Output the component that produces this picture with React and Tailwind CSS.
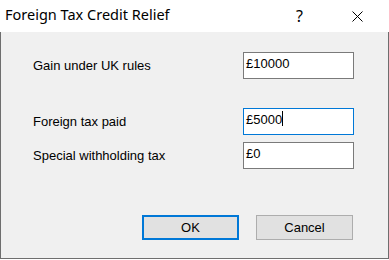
import React from 'react';

const label = "font-['Liberation_Sans',Arial,sans-serif] text-[13px] leading-[16px] text-black";

const Field = ({ text, focused, caret }) => (
  <div
    className={`w-[111px] h-[27px] bg-white border pl-[2px] pt-[3px] flex items-start ${focused ? 'border-[#0078d7]' : 'border-[#7a7a7a]'}`}
  >
    <span className={label}>{text}</span>
    {caret && <span className="w-px h-[15px] bg-black -mt-[1px]"></span>}
  </div>
);

const Row = ({ name, value, focused, caret }) => (
  <div className="flex items-center">
    <div className={`flex-1 pt-[1px] ${label}`}>{name}</div>
    <Field text={value} focused={focused} caret={caret} />
  </div>
);

export default function App() {
  return (
    <div className="w-[389px] h-[260px] bg-white flex flex-col overflow-hidden">
      <div className="h-[32px] shrink-0 flex items-center relative">
        <span className="pl-[5px] pb-[2px] font-['Noto_Sans',sans-serif] text-[14.5px] text-black">
          Foreign Tax Credit Relief
        </span>
        <span className="absolute left-[296px] top-[4px] font-['Noto_Sans',sans-serif] text-[16px] text-black">?</span>
        <svg className="absolute left-[352px] top-[11px]" width="11" height="11" viewBox="0 0 11 11">
          <path d="M0.5 0.5 L10.5 10.5 M10.5 0.5 L0.5 10.5" stroke="#000" strokeWidth="1" fill="none" />
        </svg>
      </div>

      <div className="h-[227px] shrink-0 bg-[#f0f0f0] border-l border-r border-b border-[#6e6e6e] pl-[32px] pr-[34px] pt-[20px]">
        <Row name="Gain under UK rules" value="£10000" />
        <div className="h-[29px]"></div>
        <Row name="Foreign tax paid" value="£5000" focused caret />
        <div className="h-[7px]"></div>
        <Row name="Special withholding tax" value="£0" />

        <div className="flex justify-end gap-[17px] mt-[46px] pr-px">
          <button className={`w-[97px] h-[25px] bg-[#e1e1e1] border-2 border-[#0078d7] ${label}`}>OK</button>
          <button className={`w-[97px] h-[25px] bg-[#e1e1e1] border border-[#adadad] ${label}`}>Cancel</button>
        </div>
      </div>
      <div className="h-px bg-white"></div>
    </div>
  );
}
